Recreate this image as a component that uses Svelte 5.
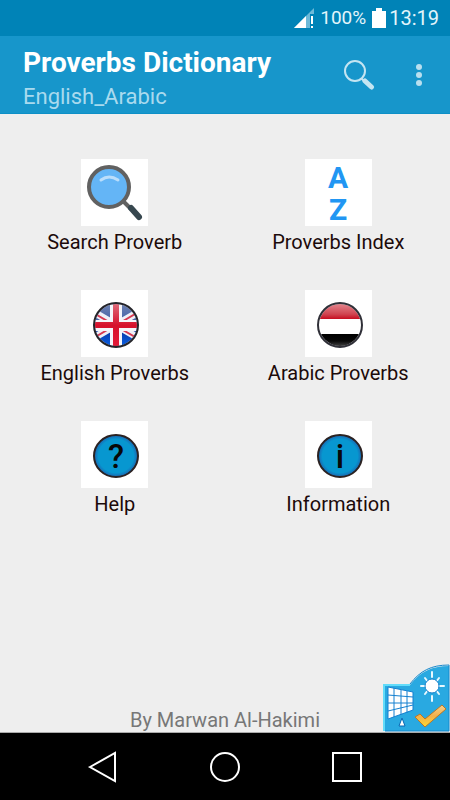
<script lang="ts">
  type Item = { id: string; label: string };

  const items: Item[] = [
    { id: 'search', label: 'Search Proverb' },
    { id: 'index', label: 'Proverbs Index' },
    { id: 'english', label: 'English Proverbs' },
    { id: 'arabic', label: 'Arabic Proverbs' },
    { id: 'help', label: 'Help' },
    { id: 'info', label: 'Information' }
  ];
</script>

<div class="screen">
  <div class="status">
    <svg class="signal" width="20" height="20" viewBox="0 0 20 20" aria-hidden="true">
      <path d="M20 0V6H16V20H0Z" fill="#6cb9d8" />
      <path d="M12 8V20H0Z" fill="#fff" />
      <path d="M17 8h2v8h-2zM17 18h2v2h-2z" fill="#fff" />
    </svg>
    <span class="level">100%</span>
    <svg class="battery" width="14" height="20" viewBox="0 0 14 20" aria-hidden="true">
      <path d="M4 0h6v3h4v17H0V3h4z" fill="#fff" />
    </svg>
    <time class="clock">13:19</time>
  </div>

  <header class="bar">
    <div class="titles">
      <h1>Proverbs Dictionary</h1>
      <p>English_Arabic</p>
    </div>
    <button class="action" aria-label="Search">
      <svg width="32" height="32" viewBox="0 0 32 32" fill="none" aria-hidden="true">
        <circle cx="12" cy="12" r="10" stroke="#c4e5f2" stroke-width="2" />
        <path d="M18.500 19.500l3 3" stroke="#c4e5f2" stroke-width="2" />
        <path d="M22 22l6.500 6" stroke="#c4e5f2" stroke-width="5" stroke-linecap="round" />
      </svg>
    </button>
    <button class="action more" aria-label="More options">
      <svg width="8" height="24" viewBox="0 0 8 24" fill="#b9dfef" aria-hidden="true">
        <circle cx="4" cy="4" r="3" />
        <circle cx="4" cy="12" r="3" />
        <circle cx="4" cy="20" r="3" />
      </svg>
    </button>
  </header>

  <main>
    <nav class="menu">
      {#each items as item (item.id)}
        <button class="item">
          <svg class="tile" viewBox="0 0 67 67" aria-hidden="true">
            {#if item.id === 'search'}
              <path d="M43 43l7 7" stroke="#616161" stroke-width="4" />
              <path d="M50 49l8 9" stroke="#37474f" stroke-width="6" stroke-linecap="round" />
              <circle cx="28" cy="28" r="20" fill="#64b5f6" stroke="#616161" stroke-width="4" />
              <path d="M20 21q8-6 17 0" fill="none" stroke="#bbdefb" stroke-width="3" stroke-linecap="round" />
            {:else if item.id === 'index'}
              <text class="letter" x="33" y="29">A</text>
              <text class="letter" x="33" y="61">Z</text>
            {:else if item.id === 'english'}
              <defs>
                <clipPath id="uk-clip"><circle cx="35" cy="35" r="21" /></clipPath>
                <linearGradient id="uk-blue" x2="0" y2="1">
                  <stop offset="0" stop-color="#7184b4" />
                  <stop offset=".48" stop-color="#3c5ca5" />
                  <stop offset=".55" stop-color="#0b2f96" />
                  <stop offset="1" stop-color="#0962e8" />
                </linearGradient>
                <linearGradient id="uk-red" x2="0" y2="1">
                  <stop offset="0" stop-color="#df7180" />
                  <stop offset=".5" stop-color="#d6112c" />
                  <stop offset="1" stop-color="#e51c3a" />
                </linearGradient>
              </defs>
              <g clip-path="url(#uk-clip)">
                <rect x="13" y="13" width="44" height="44" fill="url(#uk-blue)" />
                <path d="M9 20l52 30M61 20L9 50" stroke="#eef0f8" stroke-width="7" />
                <path d="M9 21l26 15M61 20L37 34M61 51L35 36M9 50l24-14" stroke="#d83a52" stroke-width="2" />
                <path d="M29 12h12v18h18v11H41v18H29V41H11V30h18z" fill="#f5f5fa" />
                <path d="M32 12h6v20h21v6H38v21h-6V38H11v-6h21z" fill="url(#uk-red)" />
              </g>
              <circle cx="35" cy="35" r="22" fill="none" stroke="#24242a" stroke-width="2" />
            {:else if item.id === 'arabic'}
              <defs>
                <clipPath id="ye-clip"><circle cx="35" cy="35" r="21" /></clipPath>
                <linearGradient id="ye-red" x2="0" y2="1">
                  <stop offset="0" stop-color="#e58a92" />
                  <stop offset=".7" stop-color="#d04450" />
                  <stop offset="1" stop-color="#c70d20" />
                </linearGradient>
                <linearGradient id="ye-black" x2="0" y2="1">
                  <stop offset="0" stop-color="#000" />
                  <stop offset=".5" stop-color="#080808" />
                  <stop offset="1" stop-color="#555" />
                </linearGradient>
              </defs>
              <g clip-path="url(#ye-clip)">
                <rect x="13" y="13" width="44" height="16" fill="url(#ye-red)" />
                <rect x="13" y="29" width="44" height="15" fill="#fff" />
                <rect x="13" y="44" width="44" height="14" fill="url(#ye-black)" />
              </g>
              <circle cx="35" cy="35" r="22" fill="none" stroke="#303038" stroke-width="2" />
            {:else}
              <defs>
                <radialGradient id="{item.id}-fill">
                  <stop offset=".8" stop-color="#0797d0" />
                  <stop offset=".94" stop-color="#1672b8" />
                  <stop offset="1" stop-color="#173a6b" />
                </radialGradient>
              </defs>
              <ellipse cx="35" cy="35" rx="22" ry="21" fill="url(#{item.id}-fill)" stroke="#2b2222" stroke-width="2" />
              <text class="sign" x="35" y="47">{item.id === 'help' ? '?' : 'i'}</text>
            {/if}
          </svg>
          <span>{item.label}</span>
        </button>
      {/each}
    </nav>

    <p class="author">By Marwan Al-Hakimi</p>

    <button class="badge" aria-label="Theme settings">
      <svg width="67" height="68" viewBox="0 0 67 68" aria-hidden="true">
        <defs>
          <linearGradient id="gold" x2="0" y2="1">
            <stop offset="0" stop-color="#f7d08c" />
            <stop offset=".5" stop-color="#f3b04a" />
            <stop offset="1" stop-color="#ffd92e" />
          </linearGradient>
        </defs>
        <path d="M1 21H27C37 8 48 2 66 2V67H1Z" fill="#29a9e1" />
        <path d="M1 67V21H27" fill="none" stroke="#62dcfa" stroke-width="2" />
        <path d="M27 20C37 7 48 1 66 1V67H2" fill="none" stroke="#1688cc" stroke-width="1" />
        <path
          d="M49 8v5M49 32v5M38 22h5M56 22h5M42 14l3 4M56 14l-3 4M42 30l3-4M56 30l-3-4"
          stroke="#e8f8ff" stroke-width="2" stroke-linecap="round"
        />
        <circle cx="49" cy="22" r="7" fill="#fff" stroke="#1480cc" stroke-width="1" />
        <path d="M5 23l25 5v18L5 55z" fill="#fff" stroke="#1480d0" stroke-width="1" />
        <path d="M11 24v29M18 26v25M24 27v22M5 31l25 2M5 39h25M5 47l25-6" fill="none" stroke="#1480d0" stroke-width="1" />
        <path d="M19 54l3 8h-6z" fill="#fff" stroke="#0868b4" stroke-width="1" />
        <path d="M32 53l5-3 5 5L59 41l4 4L42 63Z" fill="url(#gold)" stroke="#b97726" stroke-width="1" />
      </svg>
    </button>
  </main>

  <footer class="softkeys">
    <button aria-label="Back">
      <svg width="32" height="32" viewBox="0 0 32 32"><path d="M4 16L29 2V30Z" /></svg>
    </button>
    <button aria-label="Home">
      <svg width="32" height="32" viewBox="0 0 32 32"><circle cx="16" cy="16" r="14" /></svg>
    </button>
    <button aria-label="Recent apps">
      <svg width="32" height="32" viewBox="0 0 32 32"><path d="M2 2H30V30H2Z" /></svg>
    </button>
  </footer>
</div>

<style>
  :global(body) { margin: 0; background: #eee; }

  .screen {
    display: flex; flex-direction: column;
    min-height: 100vh;
    font-family: Roboto, sans-serif;
    background: #eee;
  }

  button { border: none; padding: 0; background: none; font: inherit; cursor: pointer; }
  svg { display: block; }
  h1, p { margin: 0; }

  .status {
    display: flex; align-items: center; justify-content: flex-end;
    height: 36px; padding-right: 11px;
    background: #0083b7; color: #e3f5fb;
    font-size: 20px; line-height: 36px;
  }
  .signal { margin-right: 6px; }
  .level { margin-right: 6px; font-size: 19px; }
  .clock { margin-left: 3px; }

  .bar {
    display: flex; align-items: center;
    height: 77px; padding-left: 23px;
    background: #1796cb;
    border-bottom: 1px solid #0d8fc6;
  }
  .titles { flex: 1; padding-top: 8px; }
  h1 { color: #fff; font-size: 28px; font-weight: 700; line-height: 36px; }
  .titles p { color: #a9daee; font-size: 22px; line-height: 32px; }
  .action { display: grid; place-items: center; width: 58px; height: 64px; }
  .more { width: 62px; }

  main {
    position: relative;
    flex: 1;
    display: flex; flex-direction: column; justify-content: space-between;
    border-bottom: 1px solid #aaa;
  }

  .menu {
    display: grid; grid-template-columns: 1fr 1fr; row-gap: 32px;
    padding: 45px 0 32px 3px;
  }
  .item {
    display: flex; flex-direction: column; align-items: center;
    color: #1c0a0a; font-size: 20px; line-height: 32px;
  }
  .tile { width: 67px; height: 67px; background: #fff; }
  .letter { fill: #2196f3; font: 700 30px Roboto, sans-serif; text-anchor: middle; }
  .sign { fill: #080808; font: 500 33px Roboto, sans-serif; text-anchor: middle; }

  .author { color: #777; font-size: 20px; line-height: 24px; text-align: center; }

  .badge { position: absolute; right: 0; bottom: 0; }

  .softkeys {
    display: flex; align-items: center; justify-content: space-between;
    height: 67px; padding: 0 87px 0 86px;
    background: #000;
  }
  .softkeys svg { fill: none; stroke: #fff; stroke-width: 2; }
</style>
